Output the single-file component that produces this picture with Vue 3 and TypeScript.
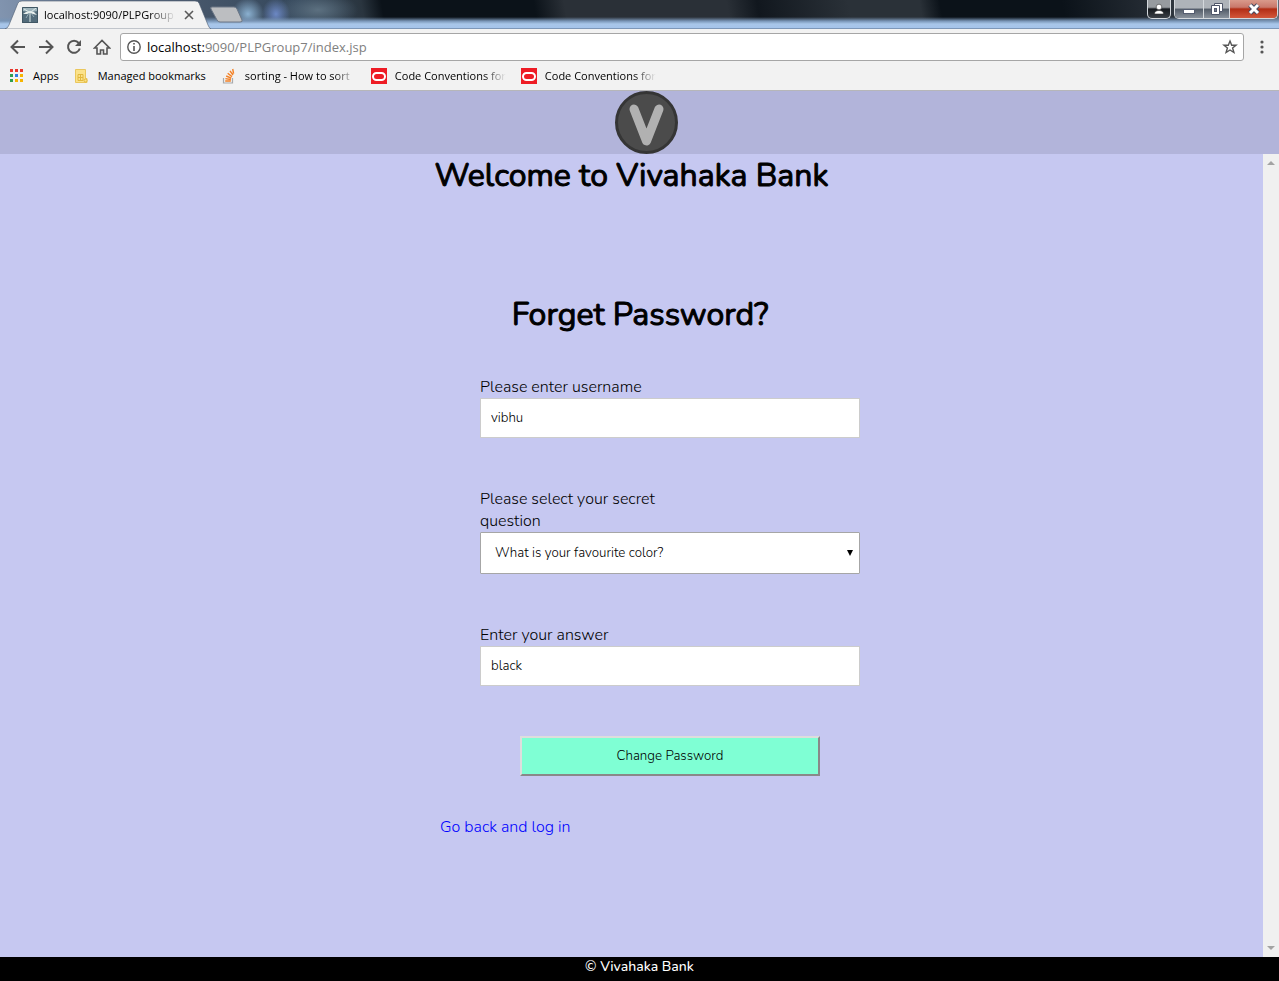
<script setup lang="ts">
import { ref } from 'vue'

interface Bookmark {
  label: string
  icon: 'apps' | 'folder' | 'stack' | 'oracle'
  faded: boolean
}

const bookmarks: Bookmark[] = [
  { label: 'Apps', icon: 'apps', faded: false },
  { label: 'Managed bookmarks', icon: 'folder', faded: false },
  { label: 'sorting - How to sort', icon: 'stack', faded: true },
  { label: 'Code Conventions for', icon: 'oracle', faded: true },
  { label: 'Code Conventions for', icon: 'oracle', faded: true },
]

const appDots = [
  '#e8352b', '#e8352b', '#e8352b',
  '#2f9e4f', '#2f7de1', '#f6b400',
  '#2f9e4f', '#f6b400', '#f6b400',
]

const username = ref('vibhu')
const question = ref('color')
const answer = ref('black')
</script>

<template>
  <div class="window">
    <div class="titlebar">
      <div class="tab">
        <svg class="tab-shape" viewBox="0 0 206 29" preserveAspectRatio="none" aria-hidden="true">
          <path d="M0 29 Q3 28 4 25 L13 3 Q14 1 17 1 H190 Q193 1 194 3 L203 25 Q204 28 206 29 Z" fill="#f2f2f2" stroke="#4d5c70" stroke-opacity=".6" />
        </svg>
        <svg class="favicon" width="16" height="16" viewBox="0 0 16 16" aria-hidden="true">
          <rect width="16" height="16" fill="#536c7b" />
          <path d="M0 0H16V4L9 5L0 4Z" fill="#9fb5bd" />
          <path d="M1 7L4 5L8 4L12 5L15 8L11 7L8 6L5 7Z" fill="#e9f0ee" />
          <path d="M8 5V15M2 2L7 5M14 1L9 5" stroke="#dce8e8" fill="none" />
          <path d="M7 6L4 11M9 6L12 10" stroke="#93aab4" fill="none" />
          <path d="M.5.5H15.5V15.5H.5Z" stroke="#405764" fill="none" />
        </svg>
        <span class="tab-title">localhost:9090/PLPGroup</span>
        <button class="icon-button" type="button" aria-label="Close tab">
          <svg width="10" height="10" viewBox="0 0 10 10"><path d="M1 1L9 9M9 1L1 9" stroke="#5a5a5a" stroke-width="1.600" /></svg>
        </button>
      </div>
      <button class="icon-button new-tab" type="button" aria-label="New tab">
        <svg width="36" height="18" viewBox="0 0 36 18"><path d="M3 1H25Q27 1 28 3L33 14Q34 16 31 16H11Q9 16 8 14L2 3Q1 1 3 1Z" fill="#bcbec1" stroke="#6c7786" /></svg>
      </button>
      <div class="window-controls">
        <button class="control user" type="button" aria-label="User">
          <svg width="12" height="12" viewBox="0 0 12 12"><circle cx="6" cy="4" r="2.8" fill="#fff" stroke="#333" stroke-width=".6" /><path d="M1.500 11Q1.500 7.500 6 7.500T10.500 11Z" fill="#fff" stroke="#333" stroke-width=".6" /></svg>
        </button>
        <div class="control-group">
          <button class="control minimize" type="button" aria-label="Minimize">
            <svg width="14" height="14" viewBox="0 0 14 14"><rect x="1.500" y="7.500" width="11" height="4" fill="#fff" stroke="#555d70" /></svg>
          </button>
          <button class="control restore" type="button" aria-label="Restore">
            <svg width="14" height="14" viewBox="0 0 14 14"><path d="M4.500 1.500H12.500V9.500H4.500Z" fill="#fff" stroke="#4f5669" /><path d="M1.500 3.500H9.500V12.500H1.500Z" fill="#fff" stroke="#4f5669" /><rect x="4.500" y="6.500" width="2" height="3" fill="#777f91" stroke="#4f5669" /></svg>
          </button>
          <button class="control close" type="button" aria-label="Close">
            <svg width="14" height="12" viewBox="0 0 14 12"><path d="M3 2L11 10M11 2L3 10" stroke="#454b60" stroke-width="5" /><path d="M3 2L11 10M11 2L3 10" stroke="#fff" stroke-width="3" /></svg>
          </button>
        </div>
      </div>
    </div>

    <div class="toolbar">
      <nav class="nav-buttons" aria-label="Navigation">
        <button class="icon-button" type="button" aria-label="Back">
          <svg width="16" height="16" viewBox="0 0 16 16"><path d="M15 8H2M8 1.500L1.500 8L8 14.500" fill="none" stroke="#555" stroke-width="2" /></svg>
        </button>
        <button class="icon-button" type="button" aria-label="Forward">
          <svg width="16" height="16" viewBox="0 0 16 16"><path d="M1 8H14M8 1.500L14.500 8L8 14.500" fill="none" stroke="#555" stroke-width="2" /></svg>
        </button>
        <button class="icon-button" type="button" aria-label="Reload">
          <svg width="16" height="16" viewBox="0 0 16 16"><path d="M12.700 4A6 6 0 1 0 13.800 9.500" fill="none" stroke="#555" stroke-width="2" /><path d="M15 1V7H9Z" fill="#555" /></svg>
        </button>
        <button class="icon-button" type="button" aria-label="Home">
          <svg width="18" height="16" viewBox="0 0 18 16"><path d="M1.500 9L9 1.500L16.500 9H14V15H10.500V11H7.500V15H4V9Z" fill="none" stroke="#555" stroke-width="1.600" /></svg>
        </button>
      </nav>
      <div class="address">
        <svg width="14" height="14" viewBox="0 0 14 14" aria-hidden="true"><circle cx="7" cy="7" r="6.200" fill="none" stroke="#555" stroke-width="1.400" /><path d="M7 6V11M7 3V4.600" stroke="#555" stroke-width="1.600" /></svg>
        <span class="url"><span class="host">localhost:</span>9090/PLPGroup7/index.jsp</span>
        <button class="icon-button" type="button" aria-label="Bookmark this page">
          <svg width="16" height="16" viewBox="0 0 16 16"><path d="M8 2L9.700 6.200H14L10.600 9L11.900 13.500L8 11L4.100 13.500L5.400 9L2 6.200H6.300Z" fill="none" stroke="#555" stroke-width="1.400" /></svg>
        </button>
      </div>
      <button class="icon-button menu" type="button" aria-label="Menu">
        <svg width="4" height="14" viewBox="0 0 4 14"><circle cx="2" cy="2" r="1.600" fill="#555" /><circle cx="2" cy="7" r="1.600" fill="#555" /><circle cx="2" cy="12" r="1.600" fill="#555" /></svg>
      </button>
    </div>

    <nav class="bookmarks" aria-label="Bookmarks">
      <a v-for="(item, i) in bookmarks" :key="i" href="#" class="bookmark">
        <svg v-if="item.icon === 'apps'" width="16" height="16" viewBox="0 0 16 16" aria-hidden="true">
          <rect v-for="(dot, d) in appDots" :key="d" :x="1 + (d % 3) * 5" :y="1 + Math.floor(d / 3) * 5" width="3" height="3" :fill="dot" />
        </svg>
        <svg v-else-if="item.icon === 'folder'" width="16" height="16" viewBox="0 0 16 16" aria-hidden="true">
          <path d="M1.500 1.500H11.500V10.500H13V14.500H1.500Z" fill="#fbe28a" stroke="#eac75d" />
          <path d="M4 6.500H9V12.500H4ZM4 9.500H9M6.500 6.500V12.500" fill="none" stroke="#e2b83e" />
          <circle cx="11.500" cy="12.500" r="1.500" fill="#fbe28a" stroke="#e2b83e" />
        </svg>
        <svg v-else-if="item.icon === 'stack'" width="16" height="16" viewBox="0 0 16 16" aria-hidden="true">
          <path d="M2.500 10V15H11.500V10" fill="none" stroke="#a7a9ac" stroke-width="1.200" />
          <path d="M4.200 13H9.800M4.400 10.600L9.900 11.500M5.200 8L10.300 10.200M6.700 5.200L11 8.600M9 2.800L12 7M11.700 1L12.600 5.600" stroke="#f48024" stroke-width="1.400" />
        </svg>
        <svg v-else width="16" height="16" viewBox="0 0 16 16" aria-hidden="true">
          <rect width="16" height="16" fill="#ee1c25" /><rect x="2" y="5" width="12" height="7" rx="3.500" fill="none" stroke="#fff" stroke-width="2" />
        </svg>
        <span class="bookmark-label" :class="{ faded: item.faded }">{{ item.label }}</span>
      </a>
    </nav>

    <header class="site-header">
      <svg class="logo" width="63" height="63" viewBox="0 0 63 63" role="img" aria-label="Vivahaka Bank logo">
        <circle cx="31.500" cy="31.500" r="30" fill="#4b4b4b" stroke="#353535" stroke-width="3" />
        <path d="M19 18L31.500 50L44 18" fill="none" stroke="#b1b1b1" stroke-width="9" stroke-linecap="round" stroke-linejoin="round" />
      </svg>
    </header>

    <div class="viewport">
      <main class="page">
        <h1>Welcome to Vivahaka Bank</h1>
        <form class="panel" @submit.prevent>
          <h2>Forget Password?</h2>
          <div class="field">
            <label for="username">Please enter username</label>
            <input id="username" v-model="username" type="text">
          </div>
          <div class="field">
            <label for="question">Please select your secret question</label>
            <div class="select-wrap">
              <select id="question" v-model="question">
                <option value="color">What is your favourite color?</option>
              </select>
              <svg class="arrow" width="6" height="6" viewBox="0 0 6 6" aria-hidden="true"><path d="M0 0H6L3 6Z" /></svg>
            </div>
          </div>
          <div class="field">
            <label for="answer">Enter your answer</label>
            <input id="answer" v-model="answer" type="text">
          </div>
          <button class="submit" type="submit">Change Password</button>
          <a class="back" href="#">Go back and log in</a>
        </form>
      </main>
      <div class="scrollbar" aria-hidden="true">
        <svg width="8" height="4" viewBox="0 0 8 4"><path d="M4 0L8 4H0Z" fill="#a3a3a3" /></svg>
        <svg width="8" height="4" viewBox="0 0 8 4"><path d="M0 0H8L4 4Z" fill="#a3a3a3" /></svg>
      </div>
    </div>

    <footer class="site-footer">© Vivahaka Bank</footer>
  </div>
</template>

<style>
html,
body {
  margin: 0;
}
</style>

<style scoped>
* {
  box-sizing: border-box;
}

.window {
  display: flex;
  flex-direction: column;
  min-height: 100vh;
  background: #c6c8f1;
  color: #000;
  font-family: "Nunito", "Open Sans", "Noto Sans", sans-serif;
  font-weight: 300;
}

button {
  font-family: inherit;
}

.icon-button {
  display: flex;
  align-items: center;
  justify-content: center;
  padding: 0;
  border: 0;
  background: none;
}

.titlebar,
.toolbar,
.bookmarks {
  font-family: "Open Sans", "Noto Sans", sans-serif;
  font-weight: 400;
}

.titlebar {
  display: flex;
  height: 29px;
  padding: 0 1px 0 5px;
  border-bottom: 1px solid #7d97b8;
  background:
    linear-gradient(180deg, transparent 17px, #7894b5 21px, #a8c6e9 24px, #a5c4ea 28px),
    radial-gradient(ellipse 16px 16px at 248px 14px, #8ab0d0, transparent),
    radial-gradient(ellipse 14px 16px at 276px 14px, #6c88c4, transparent),
    radial-gradient(ellipse 40px 18px at 318px 10px, #5c7080, transparent),
    linear-gradient(80deg, #8295b0 0, #46566a 200px, #34475b 300px, #2a353f 360px, #0b1219 380px, #0b1219 530px, #2a3037 560px, #2a3037 720px, #11171e 750px, #2a3138 840px, #2a3138 910px, #0b1219 930px, #0b1219 1050px, #262d35 1140px, #616b75 100%);
}

.tab {
  position: relative;
  display: flex;
  align-items: center;
  gap: 6px;
  width: 206px;
  height: 29px;
  padding: 0 16px 0 17px;
  font-size: 11px;
}

.tab-shape {
  position: absolute;
  inset: 0;
  width: 100%;
  height: 100%;
}

.favicon,
.tab-title,
.tab .icon-button {
  position: relative;
  flex: none;
}

.tab-title {
  width: 132px;
  white-space: nowrap;
  -webkit-mask-image: linear-gradient(90deg, #000 80%, transparent);
  mask-image: linear-gradient(90deg, #000 80%, transparent);
}

.tab .icon-button {
  margin-left: 2px;
}

.new-tab {
  width: 36px;
  height: 30px;
  margin-left: -2px;
}

.window-controls {
  display: flex;
  gap: 3px;
  height: 19px;
  margin-left: auto;
}

.control-group {
  display: flex;
  overflow: hidden;
  border: 1px solid #d4d8dc;
  border-top: 0;
  border-radius: 0 0 5px 5px;
}

.control {
  display: flex;
  align-items: center;
  justify-content: center;
  height: 18px;
  padding: 0;
  border: 0;
  background: linear-gradient(#aeb3b9 0 45%, #525b67 50%, #8a929c);
}

.user {
  width: 24px;
  height: 19px;
  border: 1px solid #d4d8dc;
  border-top: 0;
  border-radius: 0 0 5px 5px;
  background: linear-gradient(#979b9f 0 40%, #15191e 50%, #3b4046);
}

.minimize {
  width: 28px;
}

.restore {
  width: 27px;
  border-right: 1px solid #d4d8dc;
  border-left: 1px solid #d4d8dc;
}

.close {
  width: 47px;
  background: linear-gradient(#d99a8b 0, #c9786a 40%, #b22e15 50%, #d3573a);
}

.toolbar {
  display: flex;
  align-items: center;
  height: 36px;
  padding: 0 13px 0 9px;
  background: #f2f2f2;
}

.nav-buttons {
  display: flex;
  gap: 10px;
  margin-right: 9px;
}

.nav-buttons .icon-button {
  width: 18px;
  height: 18px;
}

.address {
  display: flex;
  flex: 1;
  align-items: center;
  gap: 6px;
  height: 28px;
  padding: 0 5px 0 6px;
  border: 1px solid #a6a6a6;
  border-radius: 3px;
  background: #fff;
}

.url {
  flex: 1;
  color: #808080;
  font-size: 13px;
}

.host {
  color: #000;
}

.menu {
  width: 8px;
  margin-left: 14px;
}

.bookmarks {
  display: flex;
  gap: 15px;
  height: 26px;
  padding: 0 9px 4px;
  border-bottom: 1px solid #b6b6b9;
  background: #f2f2f2;
  font-size: 11px;
}

.bookmark {
  display: flex;
  align-items: center;
  gap: 8px;
  color: #000;
  text-decoration: none;
  white-space: nowrap;
}

.faded {
  width: 111px;
  -webkit-mask-image: linear-gradient(90deg, #000 80%, transparent);
  mask-image: linear-gradient(90deg, #000 80%, transparent);
}

.site-header {
  display: flex;
  justify-content: center;
  padding-left: 14px;
  background: #b2b4da;
}

.viewport {
  display: flex;
  flex: 1;
}

.page {
  flex: 1;
  padding-bottom: 40px;
}

h1,
h2 {
  margin: 0;
  font-size: 32px;
  font-weight: 400;
  line-height: 44px;
  text-align: center;
  -webkit-text-stroke: 1px #000;
}

.panel {
  width: 457px;
  margin: 95px auto 0;
  padding-left: 37px;
}

h2 {
  width: 400px;
  margin-bottom: 39px;
}

.field {
  margin: 0 0 50px 40px;
}

label {
  display: block;
  max-width: 200px;
  font-size: 16px;
  line-height: 22px;
}

input,
select {
  display: block;
  width: 100%;
  border: 1px solid #ccc;
  background: #fff;
  color: #000;
  font-family: inherit;
  font-weight: 300;
}

input {
  height: 40px;
  padding: 0 10px;
}

.select-wrap {
  position: relative;
}

select {
  height: 42px;
  padding: 0 14px;
  border-color: #a6a6a6;
  border-radius: 1px;
  appearance: none;
}

.arrow {
  position: absolute;
  top: 18px;
  right: 7px;
  pointer-events: none;
}

.submit {
  display: block;
  width: 300px;
  height: 40px;
  margin: 0 0 40px 80px;
  border: 2px outset #ddd;
  background: #7fffd4;
  color: #000;
  font-weight: 300;
}

.back {
  color: #00f;
  font-size: 16px;
  line-height: 22px;
  text-decoration: none;
}

.scrollbar {
  display: flex;
  flex-direction: column;
  align-items: center;
  justify-content: space-between;
  width: 16px;
  padding: 7px 0;
  background: #f0f0f0;
}

.site-footer {
  height: 24px;
  background: #000;
  color: #fff;
  font-size: 14px;
  font-weight: 500;
  line-height: 20px;
  text-align: center;
}
</style>
